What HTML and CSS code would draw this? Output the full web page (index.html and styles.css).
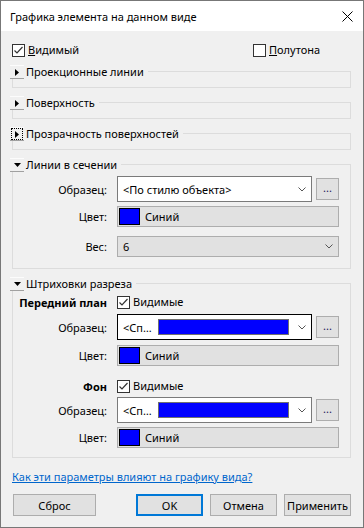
FILE: index.html
```html
<!DOCTYPE html>
<html>
<head>
    <title>Графика элемента на данном виде</title>
    <meta charset="utf-8">
    <link rel="stylesheet" href="styles.css">
</head>

<body>

<div class="dialog">
    <div class="titlebar">
        <span class="title">Графика элемента на данном виде</span>
        <svg class="close" width="11" height="11" viewBox="0 0 11 11">
            <path d="M0.5 0.5 L10.5 10.5 M10.5 0.5 L0.5 10.5" stroke="#000" stroke-width="1"/>
        </svg>
    </div>

    <div class="content">
        <div class="top-row">
            <label class="check">
                <svg class="box" width="13" height="13" viewBox="0 0 13 13">
                    <rect x="0.5" y="0.5" width="12" height="12" fill="#fff" stroke="#333"/>
                    <path d="M2.5 6.5 L5 9 L10.5 3" fill="none" stroke="#333" stroke-width="1.2"/>
                </svg>
                <span><u>В</u>идимый</span>
            </label>
            <label class="check">
                <svg class="box" width="13" height="13" viewBox="0 0 13 13">
                    <rect x="0.5" y="0.5" width="12" height="12" fill="#fff" stroke="#333"/>
                </svg>
                <span><u>П</u>олутона</span>
            </label>
        </div>

        <div class="group first">
            <div class="group-head">
                <span class="toggle"><svg width="4" height="7" viewBox="0 0 4 7"><polygon points="0,0 4,3.5 0,7" fill="#000"/></svg></span>
                <span class="group-title">Проекционные линии</span>
            </div>
        </div>

        <div class="group">
            <div class="group-head">
                <span class="toggle"><svg width="4" height="7" viewBox="0 0 4 7"><polygon points="0,0 4,3.5 0,7" fill="#000"/></svg></span>
                <span class="group-title">Поверхность</span>
            </div>
        </div>

        <div class="group">
            <div class="group-head">
                <span class="toggle"><span class="focus"><svg width="4" height="7" viewBox="0 0 4 7"><polygon points="0,0 4,3.5 0,7" fill="#000"/></svg></span></span>
                <span class="group-title">Прозрачность поверхностей</span>
            </div>
        </div>

        <div class="group open cut-lines">
            <div class="group-head">
                <span class="toggle"><svg width="7" height="4" viewBox="0 0 7 4"><polygon points="0,0 7,0 3.5,4" fill="#000"/></svg></span>
                <span class="group-title">Линии в сечении</span>
            </div>
            <div class="row r-pattern">
                <span class="row-label">Образец:</span>
                <div class="combo">
                    <span>&lt;По стилю объекта&gt;</span>
                    <svg class="chevron" width="8" height="5" viewBox="0 0 8 5"><path d="M0.5 0.5 L4 4 L7.5 0.5" fill="none" stroke="#555"/></svg>
                </div>
                <span class="more">...</span>
            </div>
            <div class="row r-color">
                <span class="row-label">Цвет:</span>
                <div class="field"><span class="swatch"></span><span>Синий</span></div>
            </div>
            <div class="row r-weight">
                <span class="row-label">Вес:</span>
                <div class="field select">
                    <span>6</span>
                    <svg class="chevron" width="8" height="5" viewBox="0 0 8 5"><path d="M0.5 0.5 L4 4 L7.5 0.5" fill="none" stroke="#555"/></svg>
                </div>
            </div>
        </div>

        <div class="group open hatch">
            <div class="group-head">
                <span class="toggle"><svg width="7" height="4" viewBox="0 0 7 4"><polygon points="0,0 7,0 3.5,4" fill="#000"/></svg></span>
                <span class="group-title">Штриховки разреза</span>
            </div>
            <div class="row r-front">
                <span class="row-label bold">Передний план</span>
                <label class="check">
                    <svg class="box" width="13" height="13" viewBox="0 0 13 13">
                        <rect x="0.5" y="0.5" width="12" height="12" fill="#fff" stroke="#333"/>
                        <path d="M2.5 6.5 L5 9 L10.5 3" fill="none" stroke="#333" stroke-width="1.2"/>
                    </svg>
                    <span>Видимые</span>
                </label>
            </div>
            <div class="row r-pattern2">
                <span class="row-label">Образец:</span>
                <div class="combo focused">
                    <span>&lt;Сп…</span>
                    <span class="bar"></span>
                    <svg class="chevron" width="8" height="5" viewBox="0 0 8 5"><path d="M0.5 0.5 L4 4 L7.5 0.5" fill="none" stroke="#555"/></svg>
                </div>
                <span class="more">...</span>
            </div>
            <div class="row r-color2">
                <span class="row-label">Цвет:</span>
                <div class="field"><span class="swatch"></span><span>Синий</span></div>
            </div>
            <div class="row r-back">
                <span class="row-label bold">Фон</span>
                <label class="check">
                    <svg class="box" width="13" height="13" viewBox="0 0 13 13">
                        <rect x="0.5" y="0.5" width="12" height="12" fill="#fff" stroke="#333"/>
                        <path d="M2.5 6.5 L5 9 L10.5 3" fill="none" stroke="#333" stroke-width="1.2"/>
                    </svg>
                    <span>Видимые</span>
                </label>
            </div>
            <div class="row r-pattern3">
                <span class="row-label">Образец:</span>
                <div class="combo">
                    <span>&lt;Сп…</span>
                    <span class="bar"></span>
                    <svg class="chevron" width="8" height="5" viewBox="0 0 8 5"><path d="M0.5 0.5 L4 4 L7.5 0.5" fill="none" stroke="#555"/></svg>
                </div>
                <span class="more">...</span>
            </div>
            <div class="row r-color3">
                <span class="row-label">Цвет:</span>
                <div class="field"><span class="swatch"></span><span>Синий</span></div>
            </div>
        </div>

        <a class="help" href="#">Как эти параметры влияют на графику вида?</a>

        <div class="buttons">
            <button class="btn reset">Сброс</button>
            <button class="btn ok">OK</button>
            <button class="btn">Отмена</button>
            <button class="btn">Применить</button>
        </div>
    </div>
</div>

</body>
</html>
```

FILE: styles.css
```css
body {
    margin: 0;
    font-family: "Noto Sans", sans-serif;
    font-size: 11px;
    color: #000;
    background: #f0f0f0;
}

.dialog {
    width: 364px;
    height: 528px;
    box-sizing: border-box;
    border: 1px solid #777;
    background: #f0f0f0;
}

.titlebar {
    height: 30px;
    background: #fff;
    display: flex;
    align-items: center;
    padding: 0 10px 0 9px;
}

.title {
    flex: 1;
}

.content {
    padding-top: 11px;
}

.top-row {
    display: grid;
    grid-template-columns: 241px auto;
    height: 16px;
    padding-left: 11px;
}

.check {
    display: flex;
    align-items: center;
    gap: 3px;
    line-height: 16px;
    white-space: nowrap;
}

.box {
    display: block;
    flex: none;
}

/* group boxes */

.group {
    margin: 14px 0 0 11px;
    width: 339px;
    box-sizing: border-box;
    border: 1px solid #dcdcdc;
    padding-bottom: 8px;
}

.group.first {
    margin-top: 13px;
}

.group-head {
    display: flex;
    align-items: center;
    width: fit-content;
    height: 14px;
    margin: -7px 0 0 -3px;
}

.toggle {
    width: 14px;
    height: 14px;
    box-sizing: border-box;
    background: #f0f0f0;
    border-top: 1px solid #fcfcfc;
    border-bottom: 1px solid #a0a0a0;
    display: flex;
    align-items: center;
    justify-content: center;
}

.toggle svg {
    display: block;
}

.focus {
    width: 10px;
    height: 10px;
    box-sizing: border-box;
    outline: 1px dotted #000;
    display: flex;
    align-items: center;
    justify-content: center;
}

.group-title {
    background: #f0f0f0;
    padding: 0 4px 0 2px;
    line-height: 14px;
}

.cut-lines {
    padding-bottom: 11px;
}

.hatch {
    padding-bottom: 9px;
}

/* rows */

.row {
    display: flex;
    align-items: center;
}

.row-label {
    width: 94px;
    margin-right: 10px;
    text-align: right;
    white-space: nowrap;
}

.bold {
    font-weight: bold;
}

.r-pattern { margin-top: 4px; }
.r-color { margin-top: 4px; }
.r-weight { margin-top: 9px; }
.r-front { margin-top: 3px; height: 16px; }
.r-pattern2 { margin-top: 4px; }
.r-color2 { margin-top: 5px; }
.r-back { margin-top: 12px; height: 16px; }
.r-pattern3 { margin-top: 3px; }
.r-color3 { margin-top: 4px; }

.combo {
    width: 195px;
    height: 26px;
    box-sizing: border-box;
    border: 1px solid #7a7a7a;
    background: #fff;
    display: flex;
    align-items: center;
    padding-left: 5px;
}

.combo.focused {
    border-color: #000;
}

.chevron {
    display: block;
    margin: 0 5px 0 auto;
}

.bar {
    width: 131px;
    height: 16px;
    box-sizing: border-box;
    margin-left: 6px;
    background: #0000ff;
    border: 1px solid #707070;
}

.more {
    width: 23px;
    height: 22px;
    box-sizing: border-box;
    margin-left: 4px;
    border: 1px solid #adadad;
    background: #e1e1e1;
    text-align: center;
    line-height: 18px;
    color: #1a1a5a;
}

.field {
    width: 222px;
    height: 21px;
    box-sizing: border-box;
    border: 1px solid #adadad;
    background: #e1e1e1;
    display: flex;
    align-items: center;
    padding-left: 1px;
}

.field.select {
    padding-left: 5px;
}

.swatch {
    width: 21px;
    height: 17px;
    box-sizing: border-box;
    border: 1px solid #000;
    background: #0000ff;
    margin-right: 5px;
}

/* footer */

.help {
    display: block;
    width: fit-content;
    margin: 11px 0 0 11px;
    line-height: 16px;
    color: #0066cc;
}

.buttons {
    display: flex;
    gap: 7px;
    margin: 9px 0 0 12px;
}

.btn {
    width: 67px;
    height: 22px;
    box-sizing: border-box;
    padding: 0;
    border: 1px solid #adadad;
    background: #e1e1e1;
    font-family: "Noto Sans", sans-serif;
    font-size: 11px;
    color: #000;
}

.btn.reset {
    width: 83px;
    margin-right: 33px;
}

.btn.ok {
    border: 2px solid #0078d7;
}
```
